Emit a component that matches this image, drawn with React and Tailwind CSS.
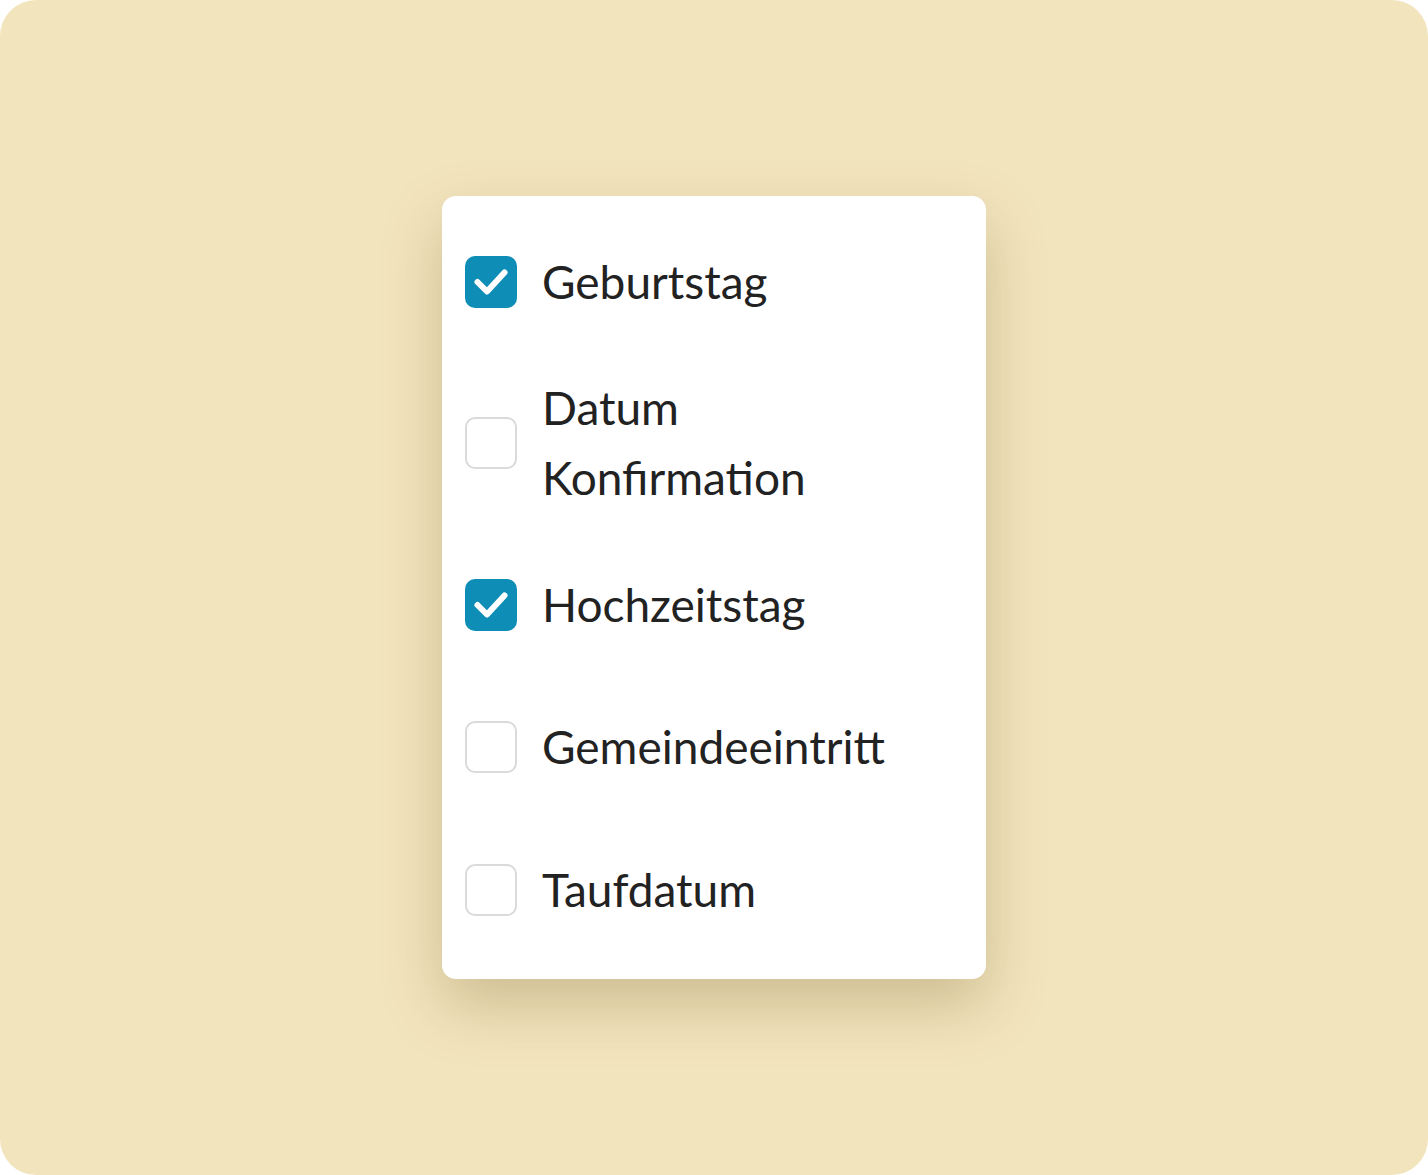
const OPTIONS = [
  { label: "Geburtstag", checked: true, gap: "mt-0" },
  { label: "Datum Konfirmation", checked: false, gap: "mt-[56px]", lines: ["Datum", "Konfirmation"] },
  { label: "Hochzeitstag", checked: true, gap: "mt-[57px]" },
  { label: "Gemeindeeintritt", checked: false, gap: "mt-[72px]" },
  { label: "Taufdatum", checked: false, gap: "mt-[73px]" },
];

function Checkbox({ checked }) {
  if (checked) {
    return (
      <span className="flex h-[52px] w-[52px] flex-shrink-0 items-center justify-center rounded-[10px] bg-[#0e8db7]">
        <svg width="52" height="52" viewBox="0 0 52 52" fill="none" aria-hidden="true">
          <path
            d="M12.5 26l9.5 9.5L39.5 16.5"
            stroke="white"
            strokeWidth="6"
            strokeLinecap="round"
            strokeLinejoin="round"
          />
        </svg>
      </span>
    );
  }
  return (
    <span className="block h-[52px] w-[52px] flex-shrink-0 rounded-[10px] border-2 border-[#dadada] bg-white" />
  );
}

export default function App() {
  return (
    <div className="min-h-screen bg-white">
      <div className="flex h-[1175px] w-[1428px] items-start justify-center rounded-[36px] bg-[#f2e4bd] pt-[196px]">
        <div className="flex w-[544px] flex-col rounded-[14px] bg-white pl-[23px] pt-[51px] pb-[54px] shadow-[0_26px_60px_rgba(110,90,40,0.28)]">
          {OPTIONS.map((opt) => (
            <label key={opt.label} className={`flex items-center gap-[25px] ${opt.gap}`}>
              <Checkbox checked={opt.checked} />
              <span className="font-['Lato','Liberation_Sans',sans-serif] text-[46px] leading-[70px] text-[#222222]">
                {opt.lines
                  ? opt.lines.map((line) => (
                      <span key={line} className="block">
                        {line}
                      </span>
                    ))
                  : opt.label}
              </span>
            </label>
          ))}
        </div>
      </div>
    </div>
  );
}
